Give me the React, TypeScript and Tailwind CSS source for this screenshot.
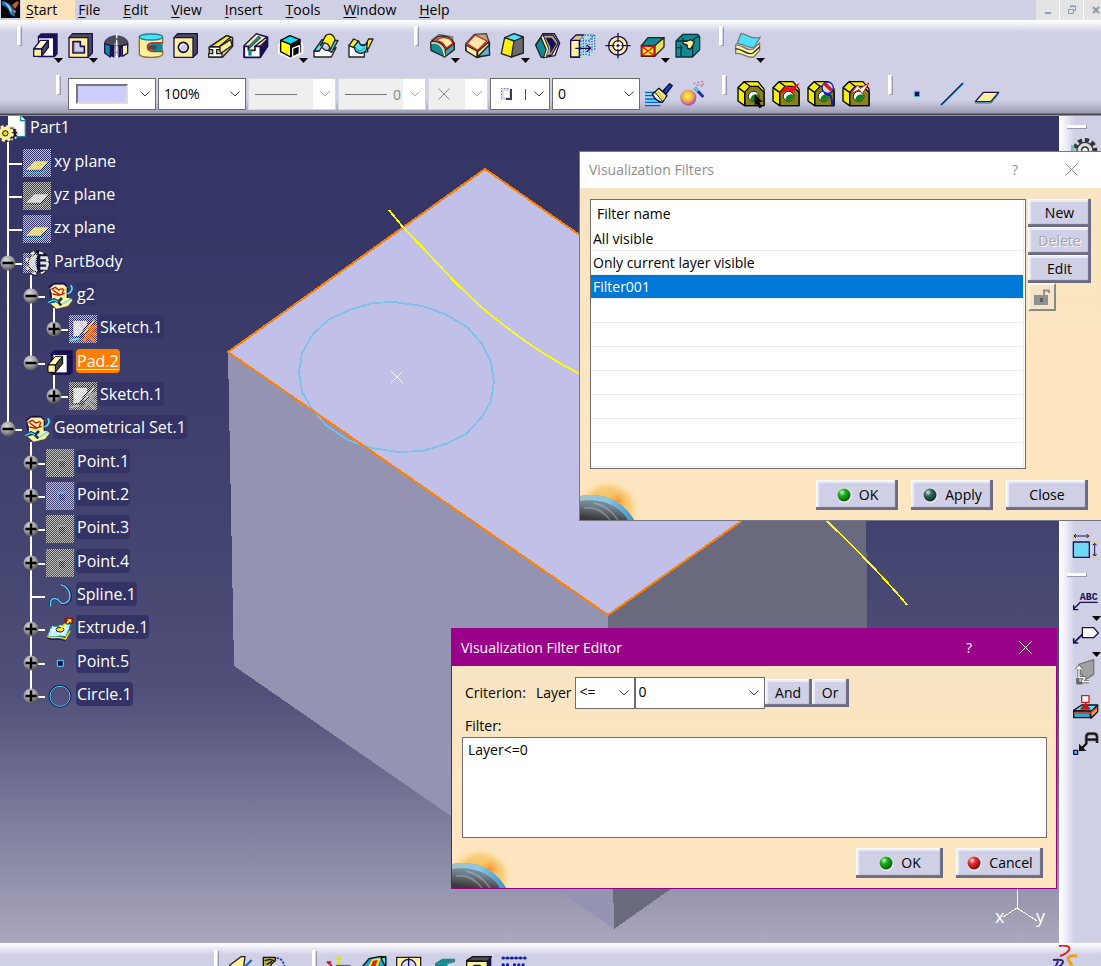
import React, { useState } from 'react';

// --- PALETTE USED BY THE DRAWINGS ---
const NAVY = '#1a1054';
const CREAM = '#fff09c';
const CYAN = '#4be1ff';
const TEAL = '#128a94';
const GREY = '#4a4a58';

// --- ICONS (78 x 78 grid, shown at 26px) ---
const Ico = ({ children }: { children: React.ReactNode }) => (
    <svg viewBox="0 0 78 78" className="size-[26px] shrink-0 overflow-visible" fill="none" strokeWidth="4" strokeLinejoin="round" aria-hidden="true">
        {children}
    </svg>
);

const PadIcon = () => (
    <Ico>
        <path d="M14 10l10-9h50v62l-9 10H16z" fill={NAVY} />
        <path d="M18 16h42v52H18z" fill="#fff" />
        <path d="M2 48l20-26h24L26 48z" fill="#ffffc8" stroke={NAVY} />
        <path d="M26 48v22l20-27V22z" fill={GREY} stroke={NAVY} />
        <path d="M2 48h24v22H2z" fill={CREAM} stroke={NAVY} />
    </Ico>
);

const PocketIcon = () => (
    <Ico>
        <path d="M3 14L14 2h59v58L60 73z" fill={GREY} stroke={NAVY} />
        <path d="M3 14h57v59H3z" fill={CREAM} stroke={NAVY} />
        <path d="M15 26h22v14h12v20H15z" fill="#cfcfe6" stroke={NAVY} strokeWidth="5" />
        <path d="M19 30v26h26" stroke="#8080a0" strokeWidth="2" />
    </Ico>
);

const ShaftIcon = () => (
    <Ico>
        <path d="M5 28c2-10 14-18 34-20 20 2 34 8 36 22v8l-18 6H24L5 36z" fill={GREY} stroke={NAVY} strokeWidth="2" />
        <path d="M5 32l17 6v34L5 60z" fill={TEAL} stroke={NAVY} />
        <path d="M24 36h10v38l-10-4zM46 36h10v34l-10 4z" fill={NAVY} />
        <path d="M58 38l16-4v26L58 70z" fill={CREAM} stroke={NAVY} />
        <path d="M34 28h12v40H34z" fill="#8c8ca0" />
        <path d="M41 0v76" stroke="#fff" strokeWidth="4" strokeDasharray="16 4" />
    </Ico>
);

const GrooveIcon = () => (
    <Ico>
        <path d="M4 12v52c6 12 64 12 70 0V52H50c-26 0-26-22 0-22h24V12z" fill={CREAM} stroke="#8a7038" />
        <ellipse cx="39" cy="12" rx="35" ry="9" fill={CYAN} stroke={TEAL} />
        <path d="M34 36c8-6 34-4 40-2v18c-12 4-32 2-40-2z" fill={TEAL} />
        <path d="M32 40c8-6 20-4 26 0l-6 10-20-2z" fill={GREY} />
        <path d="M74 30H46c-24 0-24 24 0 26h28" stroke="#c82020" />
    </Ico>
);

const HoleIcon = () => (
    <Ico>
        <path d="M3 14L14 2h59v58L60 73z" fill={GREY} stroke={NAVY} />
        <path d="M3 14h57v59H3z" fill={CREAM} stroke={NAVY} />
        <circle cx="31" cy="43" r="15" fill="#cfcfe6" stroke={NAVY} strokeWidth="5" />
        <path d="M21 46a12 12 0 0 1 12-13" stroke="#fff" strokeWidth="3" />
    </Ico>
);

const RibIcon = () => (
    <Ico>
        <path d="M4 42L56 8l18 6v26L44 72H4z" fill="#d8c878" stroke="#222" />
        <path d="M8 40L56 8l12 4-36 30z" fill="#ffee30" stroke="#222" />
        <path d="M30 44l38-24 4 18-32 22z" fill={CREAM} stroke="#222" />
        <path d="M4 42h32v8H26v12h16v10H2V62h12V50H4z" fill="#fff" stroke="#222" />
    </Ico>
);

const SlotIcon = () => (
    <Ico>
        <path d="M3 38L40 2l12 4 22 6v28L52 73H3z" fill={CREAM} stroke={NAVY} />
        <path d="M54 40l20-26v28L54 73z" fill={NAVY} />
        <path d="M14 42L46 10l8 4-34 32z" fill={TEAL} stroke={NAVY} strokeWidth="2" />
        <path d="M36 40l32-26 6 4-22 22z" fill="#f8e890" stroke={NAVY} />
        <path d="M4 40h12v12h20V40h16v33H4z" fill="#fff" stroke={NAVY} strokeWidth="5" />
        <path d="M16 50h10v18H16z" fill={TEAL} />
    </Ico>
);

const CubeIcon = () => (
    <Ico>
        <path d="M2 36v24l34 16 38-16V34M74 34l-10-6M2 36l8-6" stroke="#fff" />
        <path d="M8 22l30 12v38L8 56z" fill="#ffff10" stroke="#000" />
        <path d="M38 34l28-14v36L38 70z" fill="#0a0a0a" stroke="#000" />
        <path d="M8 22L36 8l30 12-28 14z" fill="#10e0f0" stroke="#000" />
        <path d="M44 70V46l20-8v24" stroke="#fff" />
    </Ico>
);

const LoftIcon = () => (
    <Ico>
        <path d="M3 54h12l10-12 12 10h18l14-8-14 28H3z" fill="#fff" stroke="#222" />
        <path d="M3 54l24-34 10 4-18 30z" fill={CYAN} stroke="#222" />
        <path d="M46 52l20-30h9L56 58z" fill={CYAN} stroke="#222" />
        <path d="M22 38L38 8c8-8 24-6 28 12L52 50c-4-22-22-26-30-12z" fill="#ffee20" stroke="#222" />
    </Ico>
);

const RemovedLoftIcon = () => (
    <Ico>
        <path d="M3 36v36h46V58l10-2V40l-8-4z" fill="#fff" stroke="#222" />
        <path d="M3 38l14-20 14 6-14 20z" fill="#ffee20" stroke="#222" />
        <path d="M48 44l14-26h13L62 46z" fill="#ffee20" stroke="#222" />
        <path d="M18 40l14-16c6 18 18 18 26 4l-2 20c-8 18-34 18-38-8z" fill={CYAN} stroke="#222" />
        <path d="M22 42c4 14 18 16 28 2" stroke={TEAL} strokeWidth="3" />
    </Ico>
);

const FilletIcon = () => (
    <Ico>
        <path d="M4 22L28 4l40 8v16" stroke="#777" />
        <path d="M2 28c22-4 38 10 42 44L3 52z" fill={TEAL} stroke="#222" />
        <path d="M44 72l29-22V30L46 50z" fill="#4aa0a8" stroke="#222" />
        <path d="M3 26l22-16c26-4 44 6 46 22L48 50C42 34 24 22 3 26z" fill="#b8b8c0" stroke="#222" />
        <path d="M28 16c20-6 38 2 40 16L48 46C42 30 34 22 16 24z" fill={CREAM} stroke="#c82020" />
        <path d="M4 30c22-4 36 10 40 40" stroke={CREAM} />
    </Ico>
);

const ChamferIcon = () => (
    <Ico>
        <path d="M2 32L28 4l36-2 10 30-2 28-34 14L2 52z" fill="#b8a878" stroke="#444" />
        <path d="M38 72l34-40 2 34z" fill="#60b0e0" stroke="#222" />
        <path d="M2 36l34 18v20L4 54z" fill={CREAM} stroke="#222" />
        <path d="M38 72V56l34-30v10z" fill={CREAM} stroke="#222" />
        <path d="M6 32L30 6l36 18-28 28z" fill="#ffe8a8" stroke="#c82020" />
    </Ico>
);

const DraftIcon = () => (
    <Ico>
        <path d="M40 24l30-12v48L34 72z" fill="#6a6a6a" stroke="#222" />
        <path d="M14 14L42 2l28 10-28 12z" fill={CYAN} stroke="#222" />
        <path d="M14 14l28 10-8 48L4 62z" fill="#ffee10" stroke="#222" />
    </Ico>
);

const ShellIcon = () => (
    <Ico>
        <path d="M2 36L24 2h34l16 28-14 38-34 6z" fill={CREAM} stroke={NAVY} />
        <path d="M2 36L18 14l16 36-8 24-8-2z" fill={TEAL} stroke="#222" />
        <path d="M24 6h30l16 24-20 36-18 4 8-24z" fill="#b8a878" stroke={NAVY} />
        <path d="M32 14h18l14 18-18 30V42z" fill={NAVY} />
        <path d="M22 10l16 38-8 24" stroke={CREAM} />
    </Ico>
);

const ThicknessIcon = () => (
    <Ico>
        <path d="M2 22L18 6h24L30 22v50H2z" fill="#d8c888" stroke={NAVY} />
        <path d="M2 22h26v50H2z" fill={CREAM} stroke={NAVY} />
        <path d="M30 20L44 4h30v48L58 72H30z" fill="#b8d8f0" />
        <path d="M32 24v44M40 14v54M48 22v46M66 8v50M30 22h28L72 6M58 24v48M44 6h28M74 6v46" stroke="#2c6c98" strokeDasharray="4 4" />
        <path d="M16 46h44M50 36l12 10-12 10" stroke={NAVY} />
    </Ico>
);

const ThreadIcon = () => (
    <Ico>
        <circle cx="39" cy="38" r="28" fill={CREAM} stroke={NAVY} />
        <circle cx="39" cy="38" r="15" fill="#fff8c8" stroke={NAVY} />
        <path d="M39 0v28M39 48v28M1 38h28M49 38h28" stroke={NAVY} />
        <path d="M39 33v10M34 38h10" stroke={NAVY} />
    </Ico>
);

const RemoveFaceIcon = () => (
    <Ico>
        <path d="M4 38l20-24h48L44 38z" fill={TEAL} stroke="#222" />
        <path d="M44 38l28-24v28L44 70z" fill="#e8e060" stroke="#222" />
        <path d="M4 38h40v32H4z" fill="#ffee10" stroke="#222" />
        <path d="M8 42l32 24M40 42L8 66M6 40h36v28H6z" stroke="#e81010" />
    </Ico>
);

const ReplaceFaceIcon = () => (
    <Ico>
        <path d="M3 24L24 4h44l6 8v38L52 72H3z" fill={TEAL} stroke="#083038" />
        <path d="M3 24h46l4 6v42M50 24L72 8M3 44h20" stroke="#083038" />
        <path d="M24 26l14-2 8-4 12 6-4 10-8 12-8-2-2-10-12-4z" fill={CREAM} stroke="#222" />
        <path d="M24 26V14M18 36v34" stroke="#083038" />
    </Ico>
);

const ThickSurfaceIcon = () => (
    <Ico>
        <path d="M2 36c20-4 32 22 52 12l20-18v22L56 72C36 78 22 56 2 62z" fill={CREAM} stroke="#777" />
        <path d="M2 48c20-4 32 22 52 12l20-18" stroke="#222" />
        <path d="M6 32L18 2c16-2 32 22 58 10L58 42C38 50 24 28 6 32z" fill={CYAN} stroke="#777" />
    </Ico>
);

// Yellow block with a bore, shared by the four analysis buttons
const BlockIcon = ({ children }: { children?: React.ReactNode }) => (
    <Ico>
        <path d="M0 20L18 2h42l18 22v50H20L0 60z" fill="#f4ee10" stroke="#000" />
        <path d="M20 34L36 16h24l18 18v40H20z" fill="#8a8210" stroke="#000" />
        <path d="M0 20l20 14M18 2l18 14M20 34v40" stroke="#000" />
        <ellipse cx="47" cy="46" rx="16" ry="15" fill="#fff" stroke="#222" strokeWidth="3" />
        <path d="M38 58c-4-10 12-24 24-16 0 14-12 22-24 16z" fill="#108020" />
        {children}
    </Ico>
);

const BrushIcon = () => (
    <Ico>
        <path d="M0 34h34M0 44h44M0 54h40M0 64h50M0 74h46" stroke="#0060e0" />
        <path d="M0 39h30M0 59h44" stroke="#40e0ff" strokeWidth="3" />
        <path d="M22 40l20-18 24 22-14 20c-12-2-24-12-30-24z" fill="#f0f0f0" stroke="#111" />
        <path d="M36 30l22 24" stroke="#e8d820" strokeWidth="8" />
        <path d="M30 34l22 26M42 22l24 22" stroke="#111" strokeWidth="3" />
        <path d="M54 30L74 8l8 6-18 24z" fill="#1040e0" stroke="#111" />
    </Ico>
);

const WizardIcon = () => (
    <Ico>
        <circle cx="25" cy="50" r="24" fill="url(#g-globe)" />
        <path d="M44 20l26 28" stroke="#2030a0" strokeWidth="9" />
        <path d="M44 20l10 11" stroke="#60d0f0" strokeWidth="7" />
        <path d="M42 6l4 4M54 2l4 6M66 0l2 8M50 14l8-4M62 16l10-8" stroke="#d06080" strokeWidth="5" strokeDasharray="4 3" />
    </Ico>
);

const PointIcon = () => (
    <Ico><path d="M31 31h16v16H31z" fill={NAVY} stroke={CYAN} strokeWidth="2" /></Ico>
);

const LineIcon = () => (
    <Ico>
        <path d="M8 74L74 8" stroke={CYAN} strokeWidth="5" />
        <path d="M6 72L72 6" stroke={NAVY} />
    </Ico>
);

const PlaneIcon = () => (
    <Ico>
        <path d="M4 62l24-28h46L50 62z" fill={CREAM} stroke={NAVY} />
        <path d="M4 66h48L74 38" stroke={TEAL} strokeWidth="3" />
    </Ico>
);

// Icons of the specification tree (84 x 84 grid, shown at 28px)
const treeIcons: Record<string, React.ReactNode> = {
    plane: (
        <>
            <path d="M8 62l26-25h46L54 62z" fill={CREAM} />
            <path d="M4 66h50l26-30" stroke={NAVY} strokeWidth="6" />
            <path d="M4 71h54l22-28" stroke={TEAL} strokeWidth="3" />
        </>
    ),
    body: (
        <>
            <circle cx="42" cy="42" r="27" fill="#f4f4f4" stroke="#111" strokeWidth="5" />
            <circle cx="42" cy="42" r="34" stroke="#111" strokeWidth="9" strokeDasharray="14 12" />
            <circle cx="42" cy="42" r="32" stroke="#eee" strokeWidth="8" strokeDasharray="12 14" />
            <path d="M46 16c-12 16-12 36 0 52h14c14-16 12-40 0-52z" fill="#15153a" />
            <path d="M52 26h22M52 42h24M52 58h22" stroke="#e4e4e4" strokeWidth="9" />
        </>
    ),
    geoset: (
        <>
            <path d="M10 20L24 8h30l10 8v30l16 8-14 18-34 8-14-12-10-8 10-10V34z" fill={CREAM} />
            <path d="M8 18c6-10 16-12 20-14h26l10 12M12 20l2 28M64 18v30" stroke={NAVY} strokeWidth="4" />
            <path d="M16 22l12-6 10 8 14-4M20 36l18 4 18-6M20 24l20 14M54 22l-6 14" stroke="#c01818" strokeWidth="4" />
            <path d="M6 62l18-10 12 8 12-12M6 62l26-6 14 14" stroke="#083a60" strokeWidth="8" />
            <path d="M6 62l18-8 12 6M50 66l26-16" stroke={CYAN} strokeWidth="4" />
            <path d="M74 10c8 8 4 20-10 26" stroke={CYAN} strokeWidth="5" />
        </>
    ),
    sketch: (
        <>
            <path d="M10 14h44v50H10z" fill="#fff" />
            <path d="M10 14h52M10 14v52M20 66h34" stroke={NAVY} strokeWidth="6" />
            <path d="M76 6L46 44l-14 22 22-12 26-36z" fill="#f0e468" stroke={NAVY} strokeWidth="6" />
            <path d="M4 76l26-6" stroke={CYAN} strokeWidth="5" />
            <path d="M56 40l20-4-14 16 20 8M44 78l12-18 22 20" stroke="#ff5a00" strokeWidth="10" />
        </>
    ),
    pad: (
        <>
            <path d="M14 12L24 4h56v66l-8 8H14z" fill={NAVY} />
            <path d="M22 18h40v52H22z" fill="#fff" />
            <path d="M6 48l22-26h22L28 48z" fill="#fff8b0" stroke="#000" />
            <path d="M28 48v22l22-26V22z" fill="#444" stroke="#000" />
            <path d="M6 48h22v22H6z" fill={CREAM} stroke="#000" />
        </>
    ),
    ghostpoint: (
        <>
            <path d="M32 32h24v24H32z" fill={NAVY} />
            <path d="M36 56V33h20" stroke={CYAN} strokeWidth="3" />
            <path d="M38 36h18v18H38z" fill={NAVY} />
        </>
    ),
    spline: (
        <>
            <path d="M14 74V62c0-16 20-16 26-4 10 18 36 4 34-18C72 20 58 10 44 8" stroke={NAVY} strokeWidth="7" />
            <path d="M14 74V62c0-16 20-16 26-4 10 14 32 4 32-16C72 22 58 12 44 8" stroke={CYAN} strokeWidth="4" />
        </>
    ),
    extrude: (
        <>
            <path d="M4 62l14-30c20 8 34-8 56-4L60 66c-22-8-32 6-56-4z" fill="#b8f4fa" stroke={TEAL} />
            <path d="M12 44c20 8 34-6 56-2M26 36L16 62M44 30L34 62M60 30L48 60" stroke="#fff" strokeWidth="4" />
            <path d="M4 64c24 10 30-4 54 8l14-24" stroke="#ffe800" strokeWidth="4" />
            <path d="M4 70c24 8 32-2 54 8" stroke={NAVY} />
            <ellipse cx="42" cy="44" rx="12" ry="7" fill="#ffe800" stroke={NAVY} />
            <path d="M46 40l18-20" stroke="#ffe800" strokeWidth="6" />
            <path d="M56 8h26v18H56z" fill="#901010" />
            <path d="M62 12h14v12l-5-4-6 6-4-4 6-6z" fill="#ffe800" />
        </>
    ),
    point: <path d="M34 34h18v18H34z" fill={NAVY} stroke={CYAN} />,
    circle: (
        <>
            <circle cx="42" cy="43" r="31" stroke={NAVY} strokeWidth="6" />
            <circle cx="42" cy="43" r="30" stroke={CYAN} />
        </>
    ),
};

const Chevron = ({ muted }: { muted?: boolean }) => (
    <svg viewBox="0 0 12 8" className="pointer-events-none absolute right-[4px] top-1/2 h-2 w-3 -translate-y-1/2" fill="none" stroke={muted ? '#a8a8a8' : '#444'} strokeWidth="1" aria-hidden="true">
        <path d="M1.500 1.500l4.500 4.500 4.500-4.500" />
    </svg>
);

// --- TOOLBARS ---
const Handle = () => (
    <div className="h-5 w-[5px] shrink-0 self-start border-y border-l-3 border-r border-y-white border-l-white border-r-[#9a9ab0] border-b-[#9a9ab0]" />
);

const Tool = ({ label, menu, children }: { label: string; menu?: boolean; children: React.ReactNode }) => (
    <button type="button" aria-label={label} className="relative flex h-[34px] w-[35px] shrink-0 items-center justify-center">
        {children}
        {menu && (
            <svg viewBox="0 0 9 5" className="absolute bottom-0 right-0 h-[5px] w-[9px]" aria-hidden="true">
                <path d="M0 0h9L4.500 5z" fill="#000" />
            </svg>
        )}
    </button>
);

const Combo = ({ label, size, muted, value, children }: { label: string; size: string; muted?: boolean; value?: string; children?: React.ReactNode }) => (
    <div className={`relative h-8 shrink-0 border bg-white ${size} ${muted ? 'border-[#d8d8e0]' : 'border-[#6e6e6e]'}`}>
        {children}
        <select aria-label={label} disabled={muted} className="absolute inset-0 w-full appearance-none bg-transparent pl-[5px] text-[14px] leading-5 text-black outline-none disabled:text-[#999]">
            <option>{value || ''}</option>
        </select>
        <Chevron muted={muted} />
    </div>
);

const menus = ['Start', 'File', 'Edit', 'View', 'Insert', 'Tools', 'Window', 'Help'];

const MenuBar = () => (
    <nav className="flex h-5 shrink-0 bg-[#cfcfe6] text-[14px] leading-[18px] text-black">
        <svg viewBox="0 0 21 20" className="h-5 w-[21px] shrink-0" aria-hidden="true">
            <path d="M0 0h21v20H0z" fill="#cfcfe6" />
            <path d="M1 0h19v18H1z" fill="#080808" />
            <path d="M2 1c8 1 13 7 13 16l-5-3C9 9 6 6 2 5z" fill="#2a70b0" />
            <path d="M4 2c5 2 8 7 8 11l-2-2C9 8 7 5 4 2z" fill="#a0d8f0" />
            <path d="M12 5l5-4 2 2-4 6z" fill="#c85a20" />
            <path d="M13 9l3 2-1 3z" fill="#e08030" />
        </svg>
        {menus.map((name, i) => (
            <button
                key={name}
                type="button"
                className={`text-left ${i === 0 ? 'bg-[#fee3bb] pl-[5px] pr-[18px]' : 'pl-[3px] pr-[20px]'}`}
            >
                <span className="underline underline-offset-2">{name[0]}</span>{name.slice(1)}
            </button>
        ))}
        <div className="ml-auto flex gap-px bg-white">
            <button type="button" aria-label="Minimize" className="flex w-[23px] items-center justify-center bg-[#e4e4e4]">
                <svg viewBox="0 0 10 10" className="size-[10px]"><path d="M2 7h6v2H2z" fill="#8a9aac" /></svg>
            </button>
            <button type="button" aria-label="Restore" className="flex w-[23px] items-center justify-center bg-[#e4e4e4]">
                <svg viewBox="0 0 10 10" className="size-[10px]" fill="none" stroke="#8a9aac"><path d="M3.500 3V1.500h5v4H7M1 4.500h6M1.500 4v4.500h5V4M3 1h6" /></svg>
            </button>
            <button type="button" aria-label="Close" className="flex w-[17px] items-center justify-end bg-[#e4e4e4]">
                <svg viewBox="0 0 10 10" className="size-[10px]" stroke="#8a9aac" strokeWidth="2"><path d="M2 2l6 6M8 2L2 8" /></svg>
            </button>
        </div>
    </nav>
);

const Toolbars = () => (
    <header className="h-24 shrink-0 overflow-hidden bg-[linear-gradient(to_bottom,#ffffff_0px,#f4f4fa_3px,#cfcfe6_12px,#cfcfe6_80px,#9c9cb2_93px,#4c4c4c_94px,#4c4c4c_95px,#8c8c84_95px)]">
        <div className="flex h-[52px] items-center pl-[17px]">
            <div className="mr-[6px] self-start pt-[6px]"><Handle /></div>
            <Tool label="Pad" menu><PadIcon /></Tool>
            <Tool label="Pocket" menu><PocketIcon /></Tool>
            <Tool label="Shaft"><ShaftIcon /></Tool>
            <Tool label="Groove"><GrooveIcon /></Tool>
            <Tool label="Hole"><HoleIcon /></Tool>
            <Tool label="Rib"><RibIcon /></Tool>
            <Tool label="Slot"><SlotIcon /></Tool>
            <Tool label="Solid Combine" menu><CubeIcon /></Tool>
            <Tool label="Multi-sections Solid"><LoftIcon /></Tool>
            <Tool label="Removed Multi-sections Solid"><RemovedLoftIcon /></Tool>
            <div className="ml-[36px] mr-[6px] self-start pt-[6px]"><Handle /></div>
            <Tool label="Edge Fillet" menu><FilletIcon /></Tool>
            <Tool label="Chamfer"><ChamferIcon /></Tool>
            <Tool label="Draft Angle" menu><DraftIcon /></Tool>
            <Tool label="Shell"><ShellIcon /></Tool>
            <Tool label="Thickness"><ThicknessIcon /></Tool>
            <Tool label="Thread"><ThreadIcon /></Tool>
            <Tool label="Remove Face" menu><RemoveFaceIcon /></Tool>
            <Tool label="Replace Face"><ReplaceFaceIcon /></Tool>
            <div className="ml-[14px] mr-[6px] self-start pt-[6px]"><Handle /></div>
            <Tool label="Thick Surface" menu><ThickSurfaceIcon /></Tool>
        </div>
        <div className="flex h-11 items-center pl-[56px]">
            <div className="mr-[7px] self-start pt-[3px]"><Handle /></div>
            <div className="flex gap-[2px]">
                <Combo label="Graphic color" size="w-[88px]">
                    <div className="ml-[7px] mt-[5px] h-5 w-[52px] border-2 border-b-[#dcdcdc] border-l-[#777] border-r-[#dcdcdc] border-t-[#777] bg-[#ccccff]" />
                </Combo>
                <Combo label="Transparency" size="w-[88px]" value="100%" />
                <Combo label="Line type" size="w-[88px]" muted>
                    <div className="flex h-full w-[64px] items-center bg-[#efefef] pl-[6px]"><div className="h-px w-[42px] bg-[#777]" /></div>
                </Combo>
                <Combo label="Line thickness" size="w-[88px]" muted>
                    <div className="flex h-full w-[64px] items-center gap-[6px] bg-[#efefef] pl-[6px] text-[14px] text-[#888]">
                        <div className="h-px w-[42px] bg-[#777]" />0
                    </div>
                </Combo>
                <Combo label="Point symbol" size="w-[60px]" muted>
                    <div className="flex h-full w-9 items-center bg-[#efefef] pl-[9px]">
                        <svg viewBox="0 0 12 12" className="size-3" stroke="#888"><path d="M.5.5l11 11M11.500.5l-11 11" /></svg>
                    </div>
                </Combo>
                <Combo label="Rendering style" size="w-[60px]">
                    <div className="flex h-full items-center gap-[11px] pl-[10px]">
                        <svg viewBox="0 0 13 13" className="size-[13px]">
                            <path d="M0 0h10v12H0z" fill="#d8d8f8" />
                            <path d="M3 3h5v6H3z" fill="#fff" />
                            <path d="M9 1h2v11H5v-2h4z" fill="#3c3c50" />
                            <path d="M0 0h1v1H0zM3 0h1v1H3zM0 3h1v1H0zM0 6h1v1H0zM0 9h1v1H0zM6 0h1v1H6z" fill="#7070a0" />
                        </svg>
                        <div className="h-[11px] w-px bg-[#7a4a10]" />
                    </div>
                </Combo>
                <Combo label="Layer" size="w-[88px]" value="0" />
            </div>
            <Tool label="Painter"><BrushIcon /></Tool>
            <Tool label="Graphic properties wizard"><WizardIcon /></Tool>
            <div className="ml-[12px] mr-[6px] self-start pt-[3px]"><Handle /></div>
            <Tool label="Select block">
                <BlockIcon><path d="M50 40l24 22-10 2 8 14-8 4-8-14-6 8z" fill="#000" /></BlockIcon>
            </Tool>
            <Tool label="Update block">
                <BlockIcon><path d="M18 38l22-26 8 10L80 6 58 38l-10-10z" fill="#f01010" /></BlockIcon>
            </Tool>
            <Tool label="Inspect block">
                <BlockIcon>
                    <ellipse cx="59" cy="20" rx="17" ry="17" fill="#d8d8f0" stroke="#1020b0" />
                    <path d="M46 12l22 20 6-8L54 4z" fill="#e01818" />
                    <path d="M48 36l20 8 4 16v16" stroke="#1020b0" strokeWidth="6" />
                </BlockIcon>
            </Tool>
            <Tool label="Manual update">
                <BlockIcon><path d="M24 38l20-26 8 10L78 6 58 38l-10-12z" fill="#fff" stroke="#e01010" strokeWidth="3" /></BlockIcon>
            </Tool>
            <div className="ml-[15px] mr-[6px] self-start pt-[3px]"><Handle /></div>
            <Tool label="Point"><PointIcon /></Tool>
            <Tool label="Line"><LineIcon /></Tool>
            <Tool label="Plane"><PlaneIcon /></Tool>
        </div>
    </header>
);

// --- SPECIFICATION TREE ---
// guides: one letter per indent column, f = full line, h = ends here, n = no line
// shade: hidden elements are drawn under a checkered veil
type Node = { name: string; icon: string; guides: string; knob?: '+' | '-'; shade?: 'all' | 'half'; active?: boolean };

const nodes: Node[] = [
    { name: 'xy plane', icon: 'plane', guides: 'f', shade: 'all' },
    { name: 'yz plane', icon: 'plane', guides: 'f', shade: 'all' },
    { name: 'zx plane', icon: 'plane', guides: 'f', shade: 'all' },
    { name: 'PartBody', icon: 'body', guides: 'f', knob: '-', shade: 'half' },
    { name: 'g2', icon: 'geoset', guides: 'ff', knob: '-' },
    { name: 'Sketch.1', icon: 'sketch', guides: 'ffh', knob: '+', shade: 'all' },
    { name: 'Pad.2', icon: 'pad', guides: 'fh', knob: '-', active: true },
    { name: 'Sketch.1', icon: 'sketch', guides: 'fnh', knob: '+', shade: 'all' },
    { name: 'Geometrical Set.1', icon: 'geoset', guides: 'h', knob: '-' },
    { name: 'Point.1', icon: 'ghostpoint', guides: 'nf', knob: '+', shade: 'all' },
    { name: 'Point.2', icon: 'ghostpoint', guides: 'nf', knob: '+', shade: 'all' },
    { name: 'Point.3', icon: 'ghostpoint', guides: 'nf', knob: '+', shade: 'all' },
    { name: 'Point.4', icon: 'ghostpoint', guides: 'nf', knob: '+', shade: 'all' },
    { name: 'Spline.1', icon: 'spline', guides: 'nf' },
    { name: 'Extrude.1', icon: 'extrude', guides: 'nf', knob: '+' },
    { name: 'Point.5', icon: 'point', guides: 'nf', knob: '+' },
    { name: 'Circle.1', icon: 'circle', guides: 'nh', knob: '+' },
];

const Knob = ({ sign }: { sign: '+' | '-' }) => (
    <svg viewBox="0 0 16 16" className="absolute left-0 top-[9px] size-4" aria-hidden="true">
        <circle cx="8" cy="8" r="7.500" fill="url(#g-knob)" />
        <path d={sign === '+' ? 'M2.500 8h11M8 2.500v11' : 'M2.500 8h11'} stroke="#000" strokeWidth="2.500" />
    </svg>
);

const TreeRow = ({ node }: { node: Node }) => {
    const last = node.guides.length - 1;
    return (
        <li className="flex h-[33px] items-start nth-[3n]:h-[34px]">
            {node.guides.split('').map((g, i) => (
                <div key={i} className="relative h-full w-[23px] shrink-0">
                    {g !== 'n' && <div className={`absolute -top-1 left-[7px] w-[2px] bg-white ${g === 'f' ? 'bottom-0' : 'bottom-1/2'}`} />}
                    {i === last && <div className="absolute left-[7px] right-[1px] top-[17px] h-[2px] bg-white" />}
                    {i === last && node.knob && <Knob sign={node.knob} />}
                </div>
            ))}
            <div className="relative mt-[3px] size-7 shrink-0">
                <svg viewBox="0 0 84 84" className="size-7" fill="none" strokeWidth="3" aria-hidden="true">
                    {treeIcons[node.icon]}
                </svg>
                {node.shade && (
                    <div className={`absolute inset-y-0 left-0 bg-[repeating-conic-gradient(#c4c4c4_0_25%,transparent_0_50%)] bg-[length:2px_2px] ${node.shade === 'all' ? 'w-7' : 'my-1 w-[14px]'}`} />
                )}
            </div>
            <span
                className={`ml-[2px] mt-[3px] rounded-sm px-px text-[16px] leading-6 text-white ${node.active ? 'bg-[#ff8000] underline underline-offset-2' : 'bg-[#333366]'}`}
            >
                {node.name}
            </span>
        </li>
    );
};

const Tree = () => (
    <div className="relative">
        <div className="relative z-10 flex h-[30px] items-start">
            <svg viewBox="0 0 84 90" className="h-[30px] w-7 shrink-0" fill="none" strokeWidth="3" aria-hidden="true">
                <path d="M24 0h40l14 14v48H24z" fill="#fff" />
                <path d="M62 0v14h14v48H44" stroke={TEAL} strokeWidth="4" />
                <circle cx="34" cy="52" r="18" fill="#15153a" stroke="#d8d0a0" strokeWidth="6" strokeDasharray="6 5" />
                <circle cx="16" cy="52" r="20" fill={CREAM} stroke={CREAM} strokeWidth="11" strokeDasharray="9 7" />
                <circle cx="16" cy="52" r="8" fill="#e8e000" stroke="#111" />
            </svg>
            <span className="ml-[2px] text-[16px] leading-[22px] text-white">Part1</span>
        </div>
        <ul>
            {nodes.map((node, i) => <TreeRow key={i} node={node} />)}
        </ul>
    </div>
);

// --- 3D VIEW ---
const Scene = () => (
    <svg viewBox="0 116 1059 827" preserveAspectRatio="xMinYMin slice" className="absolute inset-0 size-full" fill="none" shapeRendering="crispEdges" aria-hidden="true">
        <path d="M228 352l380 263 6 314-380-263z" fill="#9494b2" />
        <path d="M608 615l257-181 4 315-255 180z" fill="#6a6a7f" />
        <path d="M485 169l380 265-257 181-380-263z" fill="#c1c0e8" />
        <path d="M394 302L422 306 445 314 467 327 482 344 491 362 494 381 491 401 482 417 466 434 446 444 422 451 398 452 371 448 348 440 327 426 312 409 302 392 299 372 302 353 313 334 328 320 349 310 372 303z" stroke="#7cc0e8" strokeWidth="1.800" />
        <path d="M485 169l380 265-257 181-380-263z" stroke="#ff8000" strokeWidth="2" />
        <path d="M389 210L402 226 455 282 480 306C520 340 550 359 580 374 680 420 770 465 826 520 856 549 884 577 907 605" stroke="#ffff00" strokeWidth="1.800" />
        <path d="M391 371l12 12M403 371l-12 12" stroke="#fff" />
        <path d="M1017 880v28l-14 9M1017 908l20 13" stroke="#fff" />
        <text x="995" y="923" fill="#fff" fontSize="18">x</text>
        <text x="1036" y="923" fill="#fff" fontSize="18">y</text>
    </svg>
);

// --- RIGHT HAND TOOLBAR ---
const SideBar = () => (
    <aside className="flex w-[42px] shrink-0 flex-col overflow-hidden bg-[linear-gradient(to_right,#ffffff_0px,#f0f0fa_6px,#cfcfe6_16px)] pl-[8px] pt-[9px]">
        <div className="h-1 w-5 shrink-0 border-b border-r border-[#9a9ab0] bg-white" />
        <div className="mt-[8px] shrink-0 pl-[4px]">
            <Ico>
                <circle cx="42" cy="40" r="30" stroke="#333" strokeWidth="14" strokeDasharray="12 8" />
                <circle cx="42" cy="40" r="24" fill="#ddd" stroke="#333" />
                <circle cx="42" cy="40" r="10" fill="#fff" stroke="#333" />
                <path d="M0 24h10v40H0z" fill="#70c0b0" />
            </Ico>
        </div>
        <div className="mt-[364px] flex h-[36px] shrink-0 items-center pl-[5px]">
            <Ico>
                <path d="M4 30h48v46H4z" fill="#70d8f0" stroke={NAVY} />
                <path d="M4 4v20M52 4v20M58 30h20M58 76h20" stroke="#d8d080" strokeWidth="5" />
                <path d="M6 12h44M12 6l-6 6 6 6M44 6l6 6-6 6M68 34v38M62 40l6-6 6 6M62 66l6 6 6-6" stroke={NAVY} strokeWidth="3" />
            </Ico>
        </div>
        <div className="my-[10px] h-1 w-5 shrink-0 border-b border-r border-[#9a9ab0] bg-white" />
        <div className="flex flex-col gap-[10px] pl-[6px]">
            <div className="relative">
                <Ico>
                    <path d="M2 66l20-20h52M2 54v14h14" stroke={NAVY} />
                    <text x="20" y="38" fill={NAVY} fontSize="30" fontWeight="bold" fontFamily="Liberation Mono, monospace">ABC</text>
                </Ico>
                <svg viewBox="0 0 9 5" className="absolute -bottom-2 right-0 h-[5px] w-[9px]"><path d="M0 0h9L4.500 5z" /></svg>
            </div>
            <div className="relative">
                <Ico>
                    <path d="M28 14h34l14 16-14 14H28z" fill="#fff" stroke={NAVY} />
                    <path d="M28 34L4 58M2 46v14h14" stroke={NAVY} strokeWidth="5" />
                </Ico>
                <svg viewBox="0 0 9 5" className="absolute -bottom-2 right-0 h-[5px] w-[9px]"><path d="M0 0h9L4.500 5z" /></svg>
            </div>
            <Ico>
                <path d="M18 16l44-14v44L40 60 22 42z" fill="#a0a0a0" stroke="#777" />
                <path d="M18 22v34h18l-8 12h20M10 32l8-10 8 10M14 58v14h14" stroke="#666" strokeWidth="9" />
                <path d="M18 22v34h18l-8 12h20M10 32l8-10 8 10" stroke="#fff" strokeWidth="4" />
            </Ico>
            <Ico>
                <path d="M2 46l24-16h48L54 50z" fill={CYAN} stroke="#111" />
                <path d="M2 48h50v20H2z" fill="#30a8c8" stroke="#111" />
                <path d="M52 50l22-18v18L54 70z" fill="#e8a030" stroke="#111" />
                <path d="M2 54h50l22-18" stroke="#e03020" />
                <path d="M26 2h22v20H26z" fill="#fff" stroke="#d01818" />
                <path d="M37 22v14M24 42l13-16 13 16z" fill="#c01818" stroke="#c01818" />
            </Ico>
            <Ico>
                <path d="M40 36V18q0-10 10-10h12q10 0 10 10v18M40 26h32" stroke="#777" strokeWidth="10" />
                <path d="M40 36V18q0-10 10-10h12q10 0 10 10v18M40 26h32" stroke="#111" strokeWidth="5" />
                <path d="M42 36L24 54" stroke="#111" strokeWidth="7" />
                <path d="M18 38v22h22z" fill="#111" />
                <path d="M2 58h12v12H2z" fill="#30c8f0" stroke={NAVY} />
            </Ico>
        </div>
    </aside>
);

// --- BOTTOM TOOLBAR ---
const BottomBar = () => (
    <footer className="relative flex h-[23px] shrink-0 items-start overflow-hidden bg-[linear-gradient(to_bottom,#ffffff_0px,#f4f4fa_3px,#cfcfe6_12px)] pl-[214px] pt-[7px]">
        <Handle />
        <div className="ml-[8px] mt-[6px] flex gap-[9px]">
            <Ico>
                <path d="M8 28L42 2h12l-4 30-30 20z" fill={CREAM} stroke="#222" />
                <path d="M52 34L74 12" stroke="#1060e0" strokeWidth="6" />
            </Ico>
            <Ico>
                <path d="M4 4h36v10l-12 10-4 20H4z" fill="#b8b040" stroke="#111" />
                <path d="M8 14l16-4 12 4M14 26l16-10" stroke="#111" />
                <path d="M44 6c12 0 20 10 24 26" stroke="#1030c0" strokeWidth="5" strokeDasharray="7 4" />
            </Ico>
        </div>
        <div className="ml-[24px]"><Handle /></div>
        <div className="ml-[9px] mt-[6px] flex gap-[9px]">
            <Ico>
                <path d="M38 30V6" stroke="#e8e000" />
                <path d="M28 12L38 0l10 12z" fill="#e8e000" />
                <path d="M2 18h14M4 18l14 12" stroke="#c01818" strokeWidth="5" />
                <path d="M30 28h44" stroke="#555" strokeWidth="3" />
            </Ico>
            <Ico>
                <path d="M2 34L24 8l30-6h20v40H2z" fill="#20a0c8" stroke="#111" />
                <path d="M16 40L34 10l26-4-14 34z" fill="#ffe820" />
                <path d="M28 34l8-20 14-2-8 22z" fill="#e82010" />
                <path d="M60 6l14-4v32z" fill={CYAN} stroke="#111" />
            </Ico>
            <Ico>
                <path d="M2 4h72v50H2z" fill={CREAM} stroke="#222" />
                <circle cx="38" cy="32" r="22" fill="#d8d8f0" stroke={NAVY} />
                <path d="M38 4v30M24 32h28" stroke={NAVY} />
            </Ico>
            <Ico>
                <path d="M12 22L34 8h38v10l-22 6-2 14H12z" fill={TEAL} />
                <path d="M12 22h36l24-12" stroke="#777" strokeWidth="3" />
            </Ico>
            <Ico>
                <path d="M2 14L20 2h56L64 16z" fill={GREY} stroke="#111" />
                <path d="M64 16L76 2v40H64z" fill={NAVY} />
                <path d="M2 16h62v36H2z" fill={CREAM} stroke="#111" />
                <path d="M24 28h18v10H24z" stroke="#111" />
            </Ico>
            <Ico>
                <path d="M6 6h66M6 26h14M40 26h14M66 26h6" stroke="#1020b0" strokeWidth="9" strokeLinecap="round" strokeDasharray="1 12" />
                <path d="M4 6h72" stroke="#1020b0" strokeWidth="3" />
            </Ico>
        </div>
        <svg viewBox="0 0 30 26" className="absolute right-[20px] top-[2px] h-[26px] w-[30px]" fill="none" aria-hidden="true">
            <path d="M8 1c6-1 12 0 10 4-2 3-6 5-9 6" stroke="#e02020" strokeWidth="2" />
            <path d="M2 15c8-1 12 0 9 4s-8 5-11 4M7 16L3 26" stroke="#302080" strokeWidth="2" />
            <path d="M26 11c-6-1-11 1-8 5 2 2 4 5 1 8" stroke="#f0a010" strokeWidth="3" />
        </svg>
    </footer>
);

// --- DIALOG PIECES ---
const Ball = ({ fill }: { fill: string }) => (
    <svg viewBox="0 0 16 16" className="size-4 shrink-0" aria-hidden="true">
        <circle cx="8.500" cy="8.500" r="7.500" fill="#fff" opacity=".6" />
        <circle cx="8" cy="8" r="6.500" fill={fill} />
    </svg>
);

const Button = ({ size, disabled, onClick, children }: { size: string; disabled?: boolean; onClick?: () => void; children: React.ReactNode }) => (
    <button
        type="button"
        disabled={disabled}
        onClick={onClick}
        className={`flex shrink-0 items-center justify-center gap-[7px] bg-[#cfcfe6] text-[14px] leading-5 text-black shadow-[inset_-3px_-3px_1px_#6b6b84,inset_1px_1px_1px_#ffffff,inset_3px_3px_1px_#ececfa] disabled:text-[#a4a4ae] disabled:[text-shadow:1px_1px_0_#fff] ${size}`}
    >
        {children}
    </button>
);

const Planet = () => (
    <svg viewBox="0 0 64 44" className="absolute bottom-0 left-0 h-11 w-16" aria-hidden="true">
        <ellipse cx="28" cy="32" rx="34" ry="30" fill="url(#g-glow)" />
        <circle cx="38" cy="25" r="9" fill="url(#g-sun)" />
        <path d="M0 20c22-4 42 4 54 24H0z" fill="url(#g-planet)" />
        <path d="M0 20c22-4 42 4 54 24h-6C40 30 22 22 0 25z" fill="url(#g-rim)" />
        <path d="M4 32c12-2 20 4 26 12M14 27c10 2 18 8 24 17" stroke="#d8e4ea" strokeWidth="1.500" opacity=".35" fill="none" />
    </svg>
);

const TitleButtons = () => (
    <div className="ml-auto flex items-center gap-[47px]">
        <button type="button" aria-label="Help" className="text-[14px]">?</button>
        <button type="button" aria-label="Close">
            <svg viewBox="0 0 13 13" className="size-[13px]" stroke="currentColor"><path d="M.5.5l12 12M12.500.5l-12 12" /></svg>
        </button>
    </div>
);

const filters = ['All visible', 'Only current layer visible', 'Filter001', '', '', '', '', '', '', ''];

const FiltersDialog = () => {
    const [selected, setSelected] = useState('Filter001');

    return (
        <section className="absolute right-0 top-[151px] w-[522px] border border-r-0 border-[#77778c] bg-[linear-gradient(to_bottom,#f5e4c4,#fee6c0_60%)]">
            <div className="flex h-9 items-center bg-white pb-[2px] pl-[9px] pr-[23px] text-[14px] text-[#8f8f8f]">
                <h2>Visualization Filters</h2>
                <TitleButtons />
            </div>
            <div className="flex items-start gap-[2px] pl-[10px] pt-[11px]">
                <div className="h-[270px] w-[436px] border border-[#6e6e6e] bg-white">
                    <table className="w-[433px] border-r border-[#ececec] text-left text-[14px] leading-5 text-black">
                        <thead>
                            <tr className="h-[26px]"><th className="pb-0 pl-[6px] pt-[2px] font-normal">Filter name</th></tr>
                        </thead>
                        <tbody>
                            {filters.map((name, i) => (
                                <tr
                                    key={i}
                                    onClick={() => name && setSelected(name)}
                                    className={`h-6 border-b border-[#ececec] ${name && name === selected ? 'bg-[#0078d7] text-white' : ''}`}
                                >
                                    <td className="pb-0 pl-[2px] pt-[2px]">{name}</td>
                                </tr>
                            ))}
                        </tbody>
                    </table>
                </div>
                <div className="flex flex-col">
                    <Button size="h-7 w-[63px]">New</Button>
                    <Button size="h-7 w-[63px]" disabled>Delete</Button>
                    <Button size="h-7 w-[63px]">Edit</Button>
                    <button type="button" aria-label="Lock" className="flex size-7 items-center justify-center border-2 border-b-[#8a8a80] border-l-[#fff4e0] border-r-[#8a8a80] border-t-[#fff4e0] bg-[#f5e4c8]">
                        <svg viewBox="0 0 18 18" className="size-[18px]" fill="none">
                            <path d="M1 7h14v10H1z" fill="#909090" />
                            <path d="M11 8V2.500h5V5" stroke="#909090" strokeWidth="2" />
                            <path d="M7 10h3v4H7z" fill="#606060" />
                        </svg>
                    </button>
                </div>
            </div>
            <div className="flex justify-end gap-[13px] pb-[10px] pr-[13px] pt-[11px]">
                <Button size="h-[30px] w-[82px]"><Ball fill="url(#g-green)" />OK</Button>
                <Button size="h-[30px] w-[82px]"><Ball fill="url(#g-teal)" />Apply</Button>
                <Button size="h-[30px] w-[82px]">Close</Button>
            </div>
            <Planet />
        </section>
    );
};

const EditorDialog = () => {
    const [operator, setOperator] = useState('<=');
    const [layer, setLayer] = useState('0');
    const [filter, setFilter] = useState('Layer<=0');

    const append = (word: string) => setFilter(`${filter} ${word} Layer${operator}${layer}`);

    return (
        <section className="absolute left-[451px] top-[628px] w-[606px] border border-[#9b0089] bg-[linear-gradient(to_bottom,#f5e4c4,#fee6c0_60%)] text-[14px] leading-5 text-black">
            <div className="flex h-[37px] items-center bg-[#9b0089] pl-[9px] pr-[24px] text-white">
                <h2>Visualization Filter Editor</h2>
                <TitleButtons />
            </div>
            <div className="flex h-[54px] items-center pl-[13px]">
                <span className="mr-[10px]">Criterion:</span>
                <label htmlFor="operator" className="mr-[3px]">Layer</label>
                <div className="relative h-8 w-[60px] border border-[#6e6e6e] bg-white">
                    <select id="operator" value={operator} onChange={(e) => setOperator(e.target.value)} className="h-[27px] w-full appearance-none pl-1 outline-none">
                        <option>&lt;=</option>
                        <option>&gt;=</option>
                        <option>=</option>
                    </select>
                    <Chevron />
                </div>
                <div className="relative h-8 w-[130px] border border-[#6e6e6e] bg-white">
                    <select aria-label="Layer number" value={layer} onChange={(e) => setLayer(e.target.value)} className="h-[27px] w-full appearance-none pl-[3px] outline-none">
                        <option>0</option>
                        <option>1</option>
                    </select>
                    <Chevron />
                </div>
                <Button size="h-7 w-[47px]" onClick={() => append('And')}>And</Button>
                <Button size="h-7 w-[37px]" onClick={() => append('Or')}>Or</Button>
            </div>
            <div className="flex flex-col px-[9px] pl-[10px]">
                <label htmlFor="filter" className="-mt-1 pb-[1px] pl-[3px]">Filter:</label>
                <textarea
                    id="filter"
                    value={filter}
                    onChange={(e) => setFilter(e.target.value)}
                    className="h-[101px] resize-none border border-[#6e6e6e] bg-white px-[5px] py-[2px] outline-none"
                />
            </div>
            <div className="flex justify-end gap-[13px] pb-[10px] pr-[13px] pt-[10px]">
                <Button size="h-[30px] w-[87px]"><Ball fill="url(#g-green)" />OK</Button>
                <Button size="h-[30px] w-[87px]"><Ball fill="url(#g-red)" />Cancel</Button>
            </div>
            <Planet />
        </section>
    );
};

// Gradients shared by all drawings
const SharedDefs = () => (
    <svg className="absolute size-0" aria-hidden="true">
        <defs>
            <radialGradient id="g-knob" cx=".4" cy=".3" r=".7"><stop offset="0" stopColor="#d8d8d8" /><stop offset=".6" stopColor="#999" /><stop offset="1" stopColor="#555" /></radialGradient>
            <radialGradient id="g-green" cx=".35" cy=".3" r=".75"><stop offset="0" stopColor="#c8ffc0" /><stop offset=".35" stopColor="#20b020" /><stop offset="1" stopColor="#005800" /></radialGradient>
            <radialGradient id="g-teal" cx=".35" cy=".3" r=".75"><stop offset="0" stopColor="#d8f0e8" /><stop offset=".35" stopColor="#3a6a60" /><stop offset="1" stopColor="#082820" /></radialGradient>
            <radialGradient id="g-red" cx=".35" cy=".3" r=".75"><stop offset="0" stopColor="#ffe0d8" /><stop offset=".35" stopColor="#e83030" /><stop offset="1" stopColor="#700808" /></radialGradient>
            <radialGradient id="g-globe" cx=".45" cy=".4" r=".65"><stop offset="0" stopColor="#fff860" /><stop offset=".5" stopColor="#f0b040" /><stop offset="1" stopColor="#a020f0" /></radialGradient>
            <radialGradient id="g-glow"><stop offset="0" stopColor="#f4b030" /><stop offset=".65" stopColor="#f8cc78" /><stop offset="1" stopColor="#fee6c0" stopOpacity="0" /></radialGradient>
            <radialGradient id="g-sun"><stop offset="0" stopColor="#ff9030" /><stop offset="1" stopColor="#ffa848" stopOpacity="0" /></radialGradient>
            <linearGradient id="g-planet" x1=".7" y1="0" x2=".4" y2="1"><stop offset="0" stopColor="#58a8d0" /><stop offset=".5" stopColor="#74828c" /><stop offset="1" stopColor="#3a3838" /></linearGradient>
            <linearGradient id="g-rim"><stop offset="0" stopColor="#a8c0c0" /><stop offset=".5" stopColor="#88c8e8" /><stop offset="1" stopColor="#3a94c8" /></linearGradient>
        </defs>
    </svg>
);

// --- MAIN COMPONENT ---
function App() {
    return (
        <div className="relative flex h-screen flex-col overflow-hidden bg-[#cfcfe6] font-['Open_Sans',sans-serif]">
            <SharedDefs />
            <MenuBar />
            <Toolbars />
            <main className="flex min-h-0 flex-1">
                <div className="relative min-w-0 flex-1 overflow-hidden bg-[linear-gradient(to_bottom,#333364,#444470_52%,#50507a_70%,#a9a8bd)]">
                    <Scene />
                    <Tree />
                </div>
                <SideBar />
            </main>
            <BottomBar />
            <FiltersDialog />
            <EditorDialog />
        </div>
    );
}

export default App;
